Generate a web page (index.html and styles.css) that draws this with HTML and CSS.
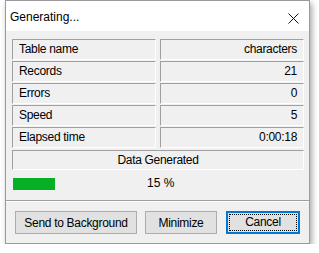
FILE: index.html
```html
<!DOCTYPE html>
<html lang="en">
<head>
    <meta charset="UTF-8">
    <title>Generating...</title>
    <link rel="stylesheet" href="styles.css">
</head>
<body>

    <div class="window">
        <div class="titlebar">
            <span class="title">Generating...</span>
            <svg class="close" width="11" height="11" viewBox="0 0 11 11">
                <path d="M0.5 0.5 L10.5 10.5 M10.5 0.5 L0.5 10.5" stroke="#111" stroke-width="1" fill="none"/>
            </svg>
        </div>

        <div class="content">
            <div class="info-grid">
                <div class="cell">Table name</div>
                <div class="cell value">characters</div>
                <div class="cell">Records</div>
                <div class="cell value">21</div>
                <div class="cell">Errors</div>
                <div class="cell value">0</div>
                <div class="cell">Speed</div>
                <div class="cell value">5</div>
                <div class="cell">Elapsed time</div>
                <div class="cell value">0:00:18</div>
            </div>

            <div class="cell status">Data Generated</div>

            <div class="progress">
                <div class="progress-bar"></div>
                <span class="percent">15 %</span>
            </div>
        </div>

        <div class="separator"></div>

        <div class="buttons">
            <button class="btn btn-bg">Send to Background</button>
            <button class="btn btn-min">Minimize</button>
            <button class="btn btn-cancel"><span class="focus">Cancel</span></button>
        </div>
    </div>

</body>
</html>
```

FILE: styles.css
```css
body {
    margin: 0;
    padding: 0;
    background: #fff;
    font-family: 'Liberation Sans', Arial, sans-serif;
    font-size: 12px;
    color: #000;
}

.window {
    margin-left: 5px;
    width: 303px;
    height: 242px;
    border: 1px solid #9a9a9a;
    background: #f0f0f0;
    box-shadow: 2px 3px 6px rgba(0, 0, 0, 0.35);
}

.titlebar {
    height: 30px;
    background: #fff;
    display: flex;
    align-items: center;
    justify-content: space-between;
    padding: 0 10px 0 4px;
}

.title {
    font-size: 12px;
    margin-top: 1px;
}

.close {
    margin-top: 5px;
}

.content {
    padding: 8px 5px 0 6px;
}

.info-grid {
    display: grid;
    grid-template-columns: 144px 144px;
    column-gap: 4px;
    row-gap: 1px;
}

.cell {
    height: 19px;
    line-height: 19px;
    padding: 0 6px;
    border-top: 1px solid #a0a0a0;
    border-left: 1px solid #a0a0a0;
    border-right: 1px solid #fff;
    border-bottom: 1px solid #fff;
    letter-spacing: -0.3px;
    white-space: nowrap;
}

.value {
    text-align: right;
}

.status {
    margin-top: 2px;
    height: 18px;
    line-height: 18px;
    text-align: center;
}

.progress {
    margin-top: 8px;
    height: 12px;
    display: flex;
    align-items: center;
    position: relative;
}

.progress-bar {
    width: 42px;
    height: 12px;
    margin-left: 1px;
    background: #06b025;
}

.percent {
    position: absolute;
    left: 135px;
    top: -2px;
}

.separator {
    margin-top: 10px;
    height: 0;
    border-top: 1px solid #a0a0a0;
    border-bottom: 1px solid #fff;
}

.buttons {
    display: flex;
    padding: 9px 0 0 9px;
}

.btn {
    font-family: 'Liberation Sans', Arial, sans-serif;
    font-size: 12px;
    letter-spacing: -0.3px;
    color: #000;
    background: #e1e1e1;
    border: 1px solid #adadad;
    height: 23px;
    padding: 0;
    margin: 0;
}

.btn-bg {
    width: 122px;
}

.btn-min {
    width: 72px;
    margin-left: 8px;
}

.btn-cancel {
    width: 74px;
    margin-left: 9px;
    border: 2px solid #0078d7;
    padding: 1px;
}

.focus {
    display: block;
    height: 15px;
    line-height: 15px;
    border: 1px dotted #000;
}
```
